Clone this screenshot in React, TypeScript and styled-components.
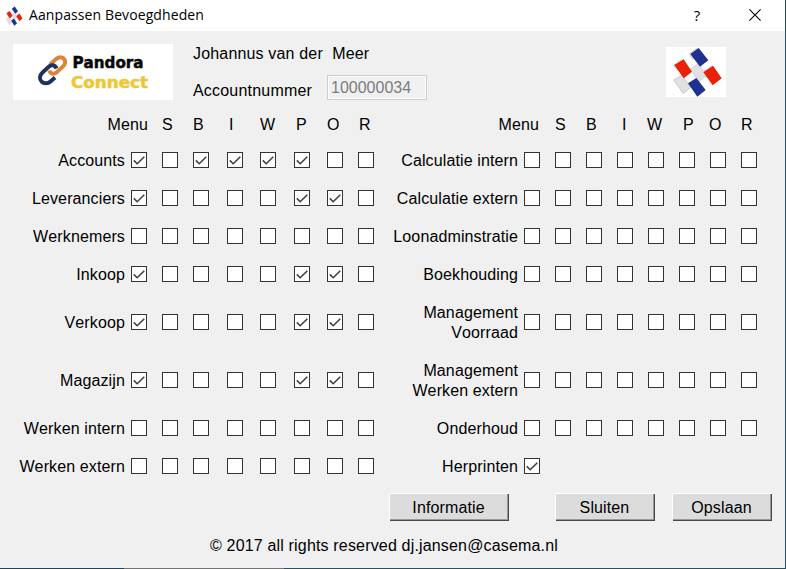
import React from "react";
import styled, { createGlobalStyle } from "styled-components";

const GlobalStyle = createGlobalStyle`
  * { box-sizing: border-box; }
  body { margin: 0; background: #f0f0f0; }
`;

const Window = styled.div`
  width: 786px;
  height: 569px;
  display: flex;
  flex-direction: column;
  background: #f0f0f0;
  border-right: 1px solid #2b4a5c;
  color: #000;
  font-family: "Liberation Sans", Arial, sans-serif;
  font-size: 16px;
  line-height: 20px;
  letter-spacing: 0.12px;
  font-kerning: none;
  white-space: pre;
  overflow: hidden;
`;

const TitleBar = styled.header`
  height: 31px;
  flex: none;
  display: flex;
  align-items: center;
  background: #fff;
  padding-left: 6px;
`;

const Title = styled.span`
  margin-left: 6px;
  flex: 1;
  font-family: "Open Sans", sans-serif;
  font-size: 14px;
  letter-spacing: 0.1px;
  padding-bottom: 1px;
`;

const CaptionButton = styled.span<{ $width: number }>`
  width: ${(p) => p.$width}px;
  height: 31px;
  display: flex;
  align-items: center;
  justify-content: center;
  font-family: "Open Sans", sans-serif;
  font-size: 15px;
  padding-bottom: 2px;
`;

const Identity = styled.section`
  height: 77px;
  flex: none;
  display: flex;
  align-items: flex-start;
  padding: 13px 59px 0 13px;
`;

const Brand = styled.svg`
  width: 160px;
  height: 56px;
  background: #fff;
  flex: none;
`;

const Account = styled.div`
  margin-left: 20px;
  flex: 1;
`;

const PersonName = styled.div`
  height: 20px;
  letter-spacing: 0.17px;
`;

const AccountLine = styled.div`
  display: flex;
  margin-top: 11px;
  align-items: flex-start;
`;

const AccountLabel = styled.label`
  width: 134px;
  padding-top: 6px;
  letter-spacing: 0.2px;
`;

const AccountField = styled.div`
  width: 100px;
  height: 25px;
  border: 1px solid #ccc;
  box-shadow: inset 0 0 0 1px #fff;
  color: #7c7c7c;
  padding: 2px 0 0 3px;
  letter-spacing: 0;
`;

const Emblem = styled.svg<{ $width: number; $height: number }>`
  width: ${(p) => p.$width}px;
  height: ${(p) => p.$height}px;
  background: #fff;
  flex: none;
`;

const EmblemSlot = styled.div`
  padding-top: 3px;
`;

const Columns = styled.main`
  display: grid;
  grid-template-columns: 376px 409px;
  height: 377px;
  flex: none;
`;

const Headings = styled.div<{ $columns: string }>`
  display: grid;
  grid-template-columns: ${(p) => p.$columns};
  height: 33px;
  padding-top: 7px;
`;

const MenuHeading = styled.span`
  text-align: right;
`;

const RightsRow = styled.div<{ $columns: string; $tall?: boolean }>`
  display: grid;
  grid-template-columns: ${(p) => p.$columns};
  height: ${(p) => (p.$tall ? 58 : 38)}px;
  align-items: center;
`;

const RowLabel = styled.span`
  text-align: right;
  padding: 2px 6px 0 0;
`;

const Box = styled.span`
  width: 16px;
  height: 16px;
  border: 1px solid #333;
  background: #fff;
  display: block;

  svg {
    display: block;
  }
`;

const Actions = styled.div`
  height: 36px;
  flex: none;
  display: flex;
  justify-content: flex-end;
  padding: 8px 13px 0 0;
`;

const ActionButton = styled.button<{ $width: number; $gap: number }>`
  width: ${(p) => p.$width}px;
  height: 28px;
  margin: 0 0 0 ${(p) => p.$gap}px;
  padding: 2px 1px 0 0;
  border: 0;
  background: #dcdcdc;
  box-shadow: inset 1px 1px 0 #fff, inset -1px -1px 0 #484848, inset -2px -2px 0 #989898;
  font: inherit;
  font-kerning: none;
  letter-spacing: inherit;
  color: #000;
`;

const Footer = styled.footer`
  flex: 1;
  padding: 15px 0 0 210px;
  letter-spacing: 0.17px;
`;

const BottomEdge = styled.div`
  height: 1px;
  flex: none;
  background: linear-gradient(90deg, #1e4560 0 124px, #737373 124px 284px, #2b5264 284px);
`;

type Row = { label: string; checks: string; tall?: boolean };

const leftRows: Row[] = [
  { label: "Accounts", checks: "10111100" },
  { label: "Leveranciers", checks: "10000110" },
  { label: "Werknemers", checks: "00000000" },
  { label: "Inkoop", checks: "10000110" },
  { label: "Verkoop", checks: "10000110", tall: true },
  { label: "Magazijn", checks: "10000110", tall: true },
  { label: "Werken intern", checks: "00000000" },
  { label: "Werken extern", checks: "00000000" },
];

const rightRows: Row[] = [
  { label: "Calculatie intern", checks: "00000000" },
  { label: "Calculatie extern", checks: "00000000" },
  { label: "Loonadminstratie", checks: "00000000" },
  { label: "Boekhouding", checks: "00000000" },
  { label: "Management\nVoorraad", checks: "00000000", tall: true },
  { label: "Management\nWerken extern", checks: "00000000", tall: true },
  { label: "Onderhoud", checks: "00000000" },
  { label: "Herprinten", checks: "1" },
];

const rights = ["S", "B", "I", "W", "P", "O", "R"];

function Checkbox({ checked }: { checked: boolean }) {
  return (
    <Box role="checkbox" aria-checked={checked}>
      {checked && (
        <svg width="14" height="14" viewBox="0 0 14 14" fill="none" stroke="#3c3c3c" strokeWidth="1.5">
          <path d="M1.8 7.4 L5.2 10.8 L12.3 3.7" />
        </svg>
      )}
    </Box>
  );
}

function RightsTable({ rows, columns, headings }: { rows: Row[]; columns: string; headings: string }) {
  return (
    <section>
      <Headings $columns={headings}>
        <MenuHeading>Menu</MenuHeading>
        <span />
        {rights.map((r) => (
          <span key={r}>{r}</span>
        ))}
      </Headings>
      {rows.map((row) => (
        <RightsRow key={row.label} $columns={columns} $tall={row.tall}>
          <RowLabel>{row.label}</RowLabel>
          {row.checks.split("").map((c, i) => (
            <Checkbox key={i} checked={c === "1"} />
          ))}
        </RightsRow>
      ))}
    </section>
  );
}

function FlagEmblem({ width, height }: { width: number; height: number }) {
  return (
    <Emblem $width={width} $height={height} viewBox={width < 30 ? "20 0 152 150" : "0 0 180 150"} preserveAspectRatio={width < 30 ? "none" : undefined}>
      <g fill="#d5d7dc">
        <path d="M94 1 L68 20 L80 40 L92 20Z M49 35 L21 54 L34 75Z M138 55 L109 75 L120 95Z" />
        <path d="M48 85 L74 121 L52 140 L23 99Z" fill="#dfe1e3" stroke="#b4b6ba" strokeWidth="2" />
        <path d="M97 50 L121 84 L100 104 L73 67Z" fill="#dfe1e3" stroke="#c2c4c8" strokeWidth="2" />
      </g>
      <path d="M98 3 L127 40 L102 59 L73 21Z M91 93 L119 129 L94 149 L66 109Z" fill="#1e3090" />
      <path d="M53 37 L78 74 L53 94 L25 54Z M141 56 L167 94 L140 115 L112 76Z" fill="#ea2008" />
    </Emblem>
  );
}

function BrandLogo() {
  return (
    <Brand viewBox="0 0 160 56">
      <g fill="none" strokeWidth="3.9">
        <path
          d="M37 20.5 L42.5 15.5 C46 12 51 12.8 52 16.8 C52.5 18.8 52 20.3 50.5 22 L43.5 28.5 C40.5 31 37 29.5 36.3 26.5"
          stroke="#dc8439"
        />
        <path
          d="M43.5 24.5 C42 20.5 38 20.5 36 22.5 L29.5 28.5 C26.3 31.5 26.3 35.2 28.5 37.5 C31 40 35 39.8 37.5 37.5 L42 33.5"
          stroke="#1e315f"
        />
      </g>
      <g fontFamily="DejaVu Sans" fontWeight="700" fontSize="15" letterSpacing="0" strokeWidth="0.5">
        <text x="59.5" y="24" textLength="71" lengthAdjust="spacingAndGlyphs" fill="#080808" stroke="#080808">Pandora</text>
        <text x="58" y="44" textLength="77" lengthAdjust="spacingAndGlyphs" fill="#edc833" stroke="#edc833">Connect</text>
      </g>
    </Brand>
  );
}

export default function App() {
  return (
    <>
      <GlobalStyle />
      <Window>
        <TitleBar>
          <FlagEmblem width={17} height={20} />
          <Title>Aanpassen Bevoegdheden</Title>
          <CaptionButton $width={56}>?</CaptionButton>
          <CaptionButton $width={60}>
            <svg width="12" height="12" viewBox="0 0 12 12" stroke="#000" strokeWidth="1.1">
              <path d="M0.4 0.4 L11.6 11.6 M11.6 0.4 L0.4 11.6" />
            </svg>
          </CaptionButton>
        </TitleBar>
        <Identity>
          <BrandLogo />
          <Account>
            <PersonName>Johannus van der  Meer</PersonName>
            <AccountLine>
              <AccountLabel>Accountnummer</AccountLabel>
              <AccountField>100000034</AccountField>
            </AccountLine>
          </Account>
          <EmblemSlot>
            <FlagEmblem width={60} height={50} />
          </EmblemSlot>
        </Identity>
        <Columns>
          <RightsTable
            rows={leftRows}
            columns="131px 31px 31px 34px 33px 34px 33px 31px 16px"
            headings="148px 14px 31px 36px 31px 36px 31px 32px 16px"
          />
          <RightsTable
            rows={rightRows}
            columns="148px 31px 31px 31px 31px 31px 31px 31px 16px"
            headings="163px 16px 31px 36px 25px 36px 26px 32px 16px"
          />
        </Columns>
        <Actions>
          <ActionButton $width={120} $gap={0}>Informatie</ActionButton>
          <ActionButton $width={100} $gap={46}>Sluiten</ActionButton>
          <ActionButton $width={100} $gap={17}>Opslaan</ActionButton>
        </Actions>
        <Footer>© 2017 all rights reserved dj.jansen@casema.nl</Footer>
        <BottomEdge />
      </Window>
    </>
  );
}
